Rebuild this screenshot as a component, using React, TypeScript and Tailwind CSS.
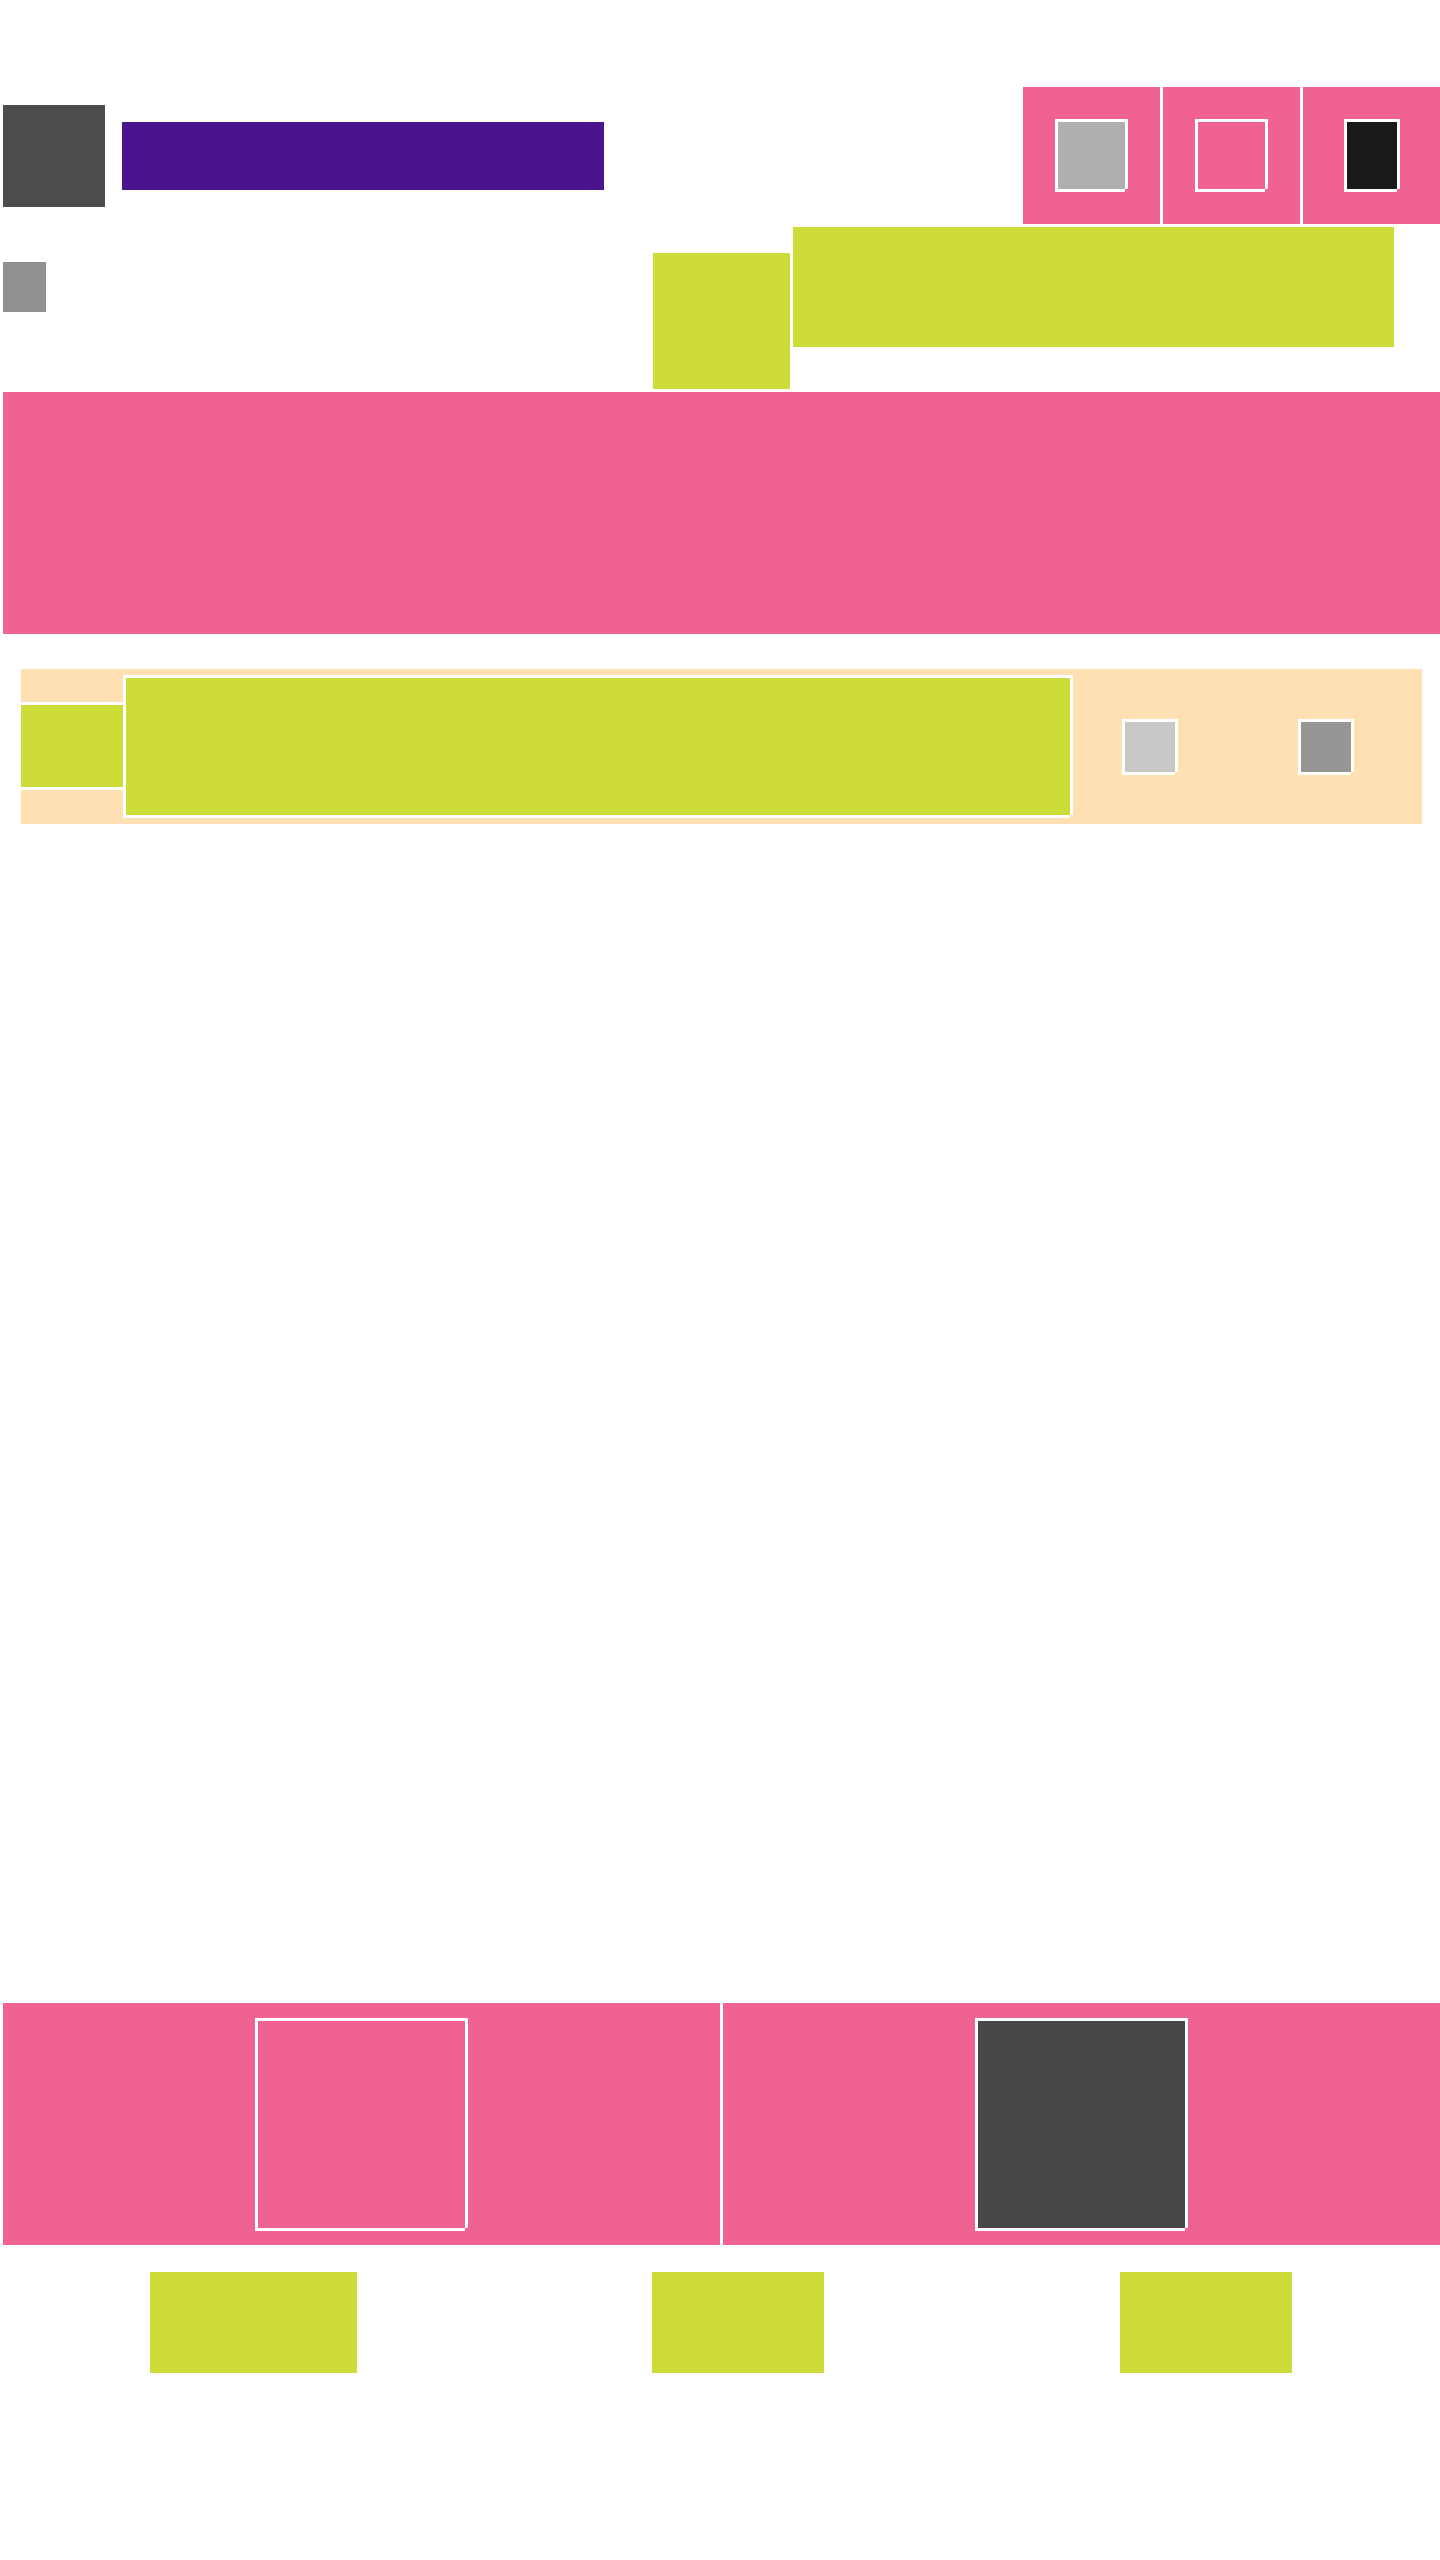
import type { ReactNode } from 'react';

/**
 * Framed block: 3px white frame whose bottom-right corner is cut,
 * so the backdrop shows through there (notch takes the backdrop colour).
 */
const Framed = ({
  className,
  notch,
  children,
}: {
  className: string;
  notch: string;
  children?: ReactNode;
}) => (
  <div className={`relative box-border border-[3px] border-white ${className}`}>
    {children}
    <span className={`absolute -right-[3px] -bottom-[3px] h-[3px] w-[3px] ${notch}`} />
  </div>
);

const App = () => (
  <div className="min-h-[2560px] w-[1440px] bg-white">
    {/* header */}
    <header className="mt-[87px] flex h-[137px] items-center pl-[3px]">
      <div className="h-[102px] w-[102px] bg-[#4d4d4d]" />
      <div className="ml-[17px] h-[68px] w-[482px] bg-[#4a148c]" />
      <div className="ml-auto flex gap-[3px]">
        <div className="flex h-[137px] w-[137px] items-center justify-center bg-[#f06292]">
          <Framed className="h-[73px] w-[73px] bg-[#afafaf]" notch="bg-[#f06292]" />
        </div>
        <div className="flex h-[137px] w-[137px] items-center justify-center bg-[#f06292]">
          <Framed className="h-[73px] w-[73px] bg-[#f06292]" notch="bg-[#f06292]" />
        </div>
        <div className="flex h-[137px] w-[137px] items-center justify-center bg-[#f06292]">
          <Framed className="h-[73px] w-[56px] bg-[#1a1a1a]" notch="bg-[#f06292]" />
        </div>
      </div>
    </header>

    {/* sub bar */}
    <div className="mt-[3px] flex h-[162px] pl-[3px]">
      <div className="mt-[35px] h-[50px] w-[43px] self-start bg-[#919191]" />
      <div className="ml-[607px] h-[136px] w-[137px] self-end bg-[#cddc39]" />
      <div className="ml-[3px] h-[120px] w-[601px] self-start bg-[#cddc39]" />
    </div>

    {/* hero */}
    <section className="mt-[3px] ml-[3px] h-[242px] bg-[#f06292]" />

    {/* strip */}
    <section className="mt-[35px] mr-[18px] ml-[21px] flex h-[155px] items-center bg-[#ffe0b2]">
      <div className="w-[102px] self-stretch pt-[33px]">
        <div className="box-border h-[88px] border-y-[3px] border-white bg-[#cddc39]" />
      </div>
      <Framed className="h-[143px] w-[950px] bg-[#cddc39]" notch="bg-[#ffe0b2]" />
      <Framed className="ml-[49px] h-[56px] w-[56px] bg-[#c8c8c8]" notch="bg-[#ffe0b2]" />
      <Framed className="ml-[120px] h-[56px] w-[56px] bg-[#969696]" notch="bg-[#ffe0b2]" />
    </section>

    {/* feature pair */}
    <section className="mt-[1179px] ml-[3px] grid h-[242px] grid-cols-2 gap-[3px]">
      <div className="flex items-center justify-center bg-[#f06292]">
        <Framed className="h-[213px] w-[213px] bg-[#f06292]" notch="bg-[#f06292]" />
      </div>
      <div className="flex items-center justify-center bg-[#f06292]">
        <Framed className="h-[213px] w-[213px] bg-[#474747]" notch="bg-[#f06292]" />
      </div>
    </section>

    {/* actions */}
    <div className="mt-[27px] flex justify-around pl-[2px]">
      <div className="h-[101px] w-[207px] bg-[#cddc39]" />
      <div className="h-[101px] w-[172px] bg-[#cddc39]" />
      <div className="h-[101px] w-[172px] bg-[#cddc39]" />
    </div>
  </div>
);

export default App;
